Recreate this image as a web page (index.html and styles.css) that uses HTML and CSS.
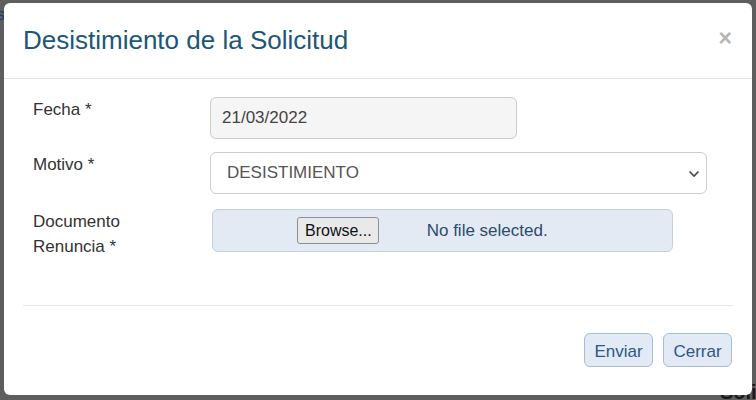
FILE: index.html
```html
<!DOCTYPE html>
<html lang="es">
<head>
<meta charset="utf-8">
<title>Desistimiento de la Solicitud</title>
<link rel="stylesheet" href="styles.css">
</head>
<body>
<div class="backdrop">
  <span class="bg-text bg-s">s</span>
  <span class="bg-text bg-soli">Soli</span>
  <div class="modal">
    <div class="modal-header">
      <h4 class="modal-title">Desistimiento de la Solicitud</h4>
      <span class="close">&times;</span>
    </div>
    <div class="modal-body">
      <div class="form-row">
        <label class="form-label">Fecha *</label>
        <div class="field field-date">21/03/2022</div>
      </div>
      <div class="form-row">
        <label class="form-label">Motivo *</label>
        <div class="field field-select">
          <span>DESISTIMIENTO</span>
          <svg class="chevron" width="12" height="8" viewBox="0 0 12 8"><path d="M1.5 1.5 L6 6 L10.5 1.5" fill="none" stroke="#444" stroke-width="1.6"/></svg>
        </div>
      </div>
      <div class="form-row">
        <label class="form-label">Documento<br>Renuncia *</label>
        <div class="field field-file">
          <span class="browse">Browse...</span>
          <span class="nofile">No file selected.</span>
        </div>
      </div>
    </div>
    <div class="modal-footer">
      <button class="btn">Enviar</button>
      <button class="btn">Cerrar</button>
    </div>
  </div>
</div>
</body>
</html>
```
FILE: styles.css
```css
html, body {
  margin: 0;
  padding: 0;
}
body {
  background: #5e5e5e;
  font-family: "Liberation Sans", Arial, sans-serif;
  width: 756px;
  height: 400px;
  overflow: hidden;
}
.backdrop {
  position: relative;
  width: 756px;
  height: 400px;
  padding: 3px 0 0 4px;
  box-sizing: border-box;
}
.bg-text {
  position: absolute;
  color: #1a1a1a;
  font-size: 16px;
}
.bg-s { left: -3px; top: 6px; color: #1c3c6c; }
.bg-soli { left: 720px; top: 381px; font-weight: bold; font-size: 20px; }
.modal {
  position: relative;
  width: 748px;
  height: 392px;
  background: #fff;
  border-radius: 6px;
  box-sizing: border-box;
  padding: 0 19px 0 19px;
}
.modal-header {
  display: flex;
  align-items: center;
  justify-content: space-between;
  height: 75px;
  border-bottom: 1px solid #e5e5e5;
  margin: 0 -19px;
  padding: 0 19px 0 19px;
}
.modal-title {
  margin: 0;
  font-weight: normal;
  font-size: 26px;
  color: #1b5778;
  padding-top: 0;
}
.close {
  font-size: 23px;
  font-weight: bold;
  color: #b5b5b5;
  margin-right: 1px;
  margin-top: -5px;
}
.modal-body {
  padding: 18px 0 0 10px;
  height: 227px;
  box-sizing: border-box;
  border-bottom: 1px solid #e8e8e8;
  margin-bottom: 27px;
}
.form-row {
  display: flex;
  align-items: flex-start;
}
.form-label {
  width: 177px;
  font-size: 17px;
  line-height: 25px;
  color: #333;
  margin-top: 0;
}
.field {
  box-sizing: border-box;
  height: 42px;
  border: 1px solid #ccc;
  border-radius: 6px;
  font-size: 17px;
  color: #555;
  display: flex;
  align-items: center;
}
.field-date {
  width: 307px;
  background: #f5f5f5;
  padding-left: 11px;
  margin-bottom: 13px;
  color: #444;
}
.field-select {
  width: 497px;
  justify-content: space-between;
  padding: 0 6px 0 16px;
  margin-bottom: 15px;
  color: #555;
}
.chevron {
  margin-top: 1px;
}
.field-file {
  width: 461px;
  height: 43px;
  margin-left: 2px;
  background: #e3eaf4;
  border-color: #c3d0de;
  padding-left: 84px;
}
.browse {
  display: inline-block;
  box-sizing: border-box;
  height: 27px;
  line-height: 25px;
  padding: 0 6px 0 7px;
  background: #e9e9e9;
  border: 1px solid #8f8f8f;
  border-radius: 3px;
  color: #111;
  font-size: 16px;
}
.nofile {
  margin-left: 48px;
  color: #2c4a6a;
}
.modal-footer {
  display: flex;
  justify-content: flex-end;
  gap: 10px;
  padding-right: 1px;
}
.btn {
  box-sizing: border-box;
  width: 69px;
  height: 34px;
  background: #e2eaf5;
  border: 1px solid #a9bcd3;
  border-radius: 6px;
  color: #2c5887;
  font-family: "Liberation Sans", Arial, sans-serif;
  font-size: 17px;
  padding: 4px 0 0 0;
}
```
